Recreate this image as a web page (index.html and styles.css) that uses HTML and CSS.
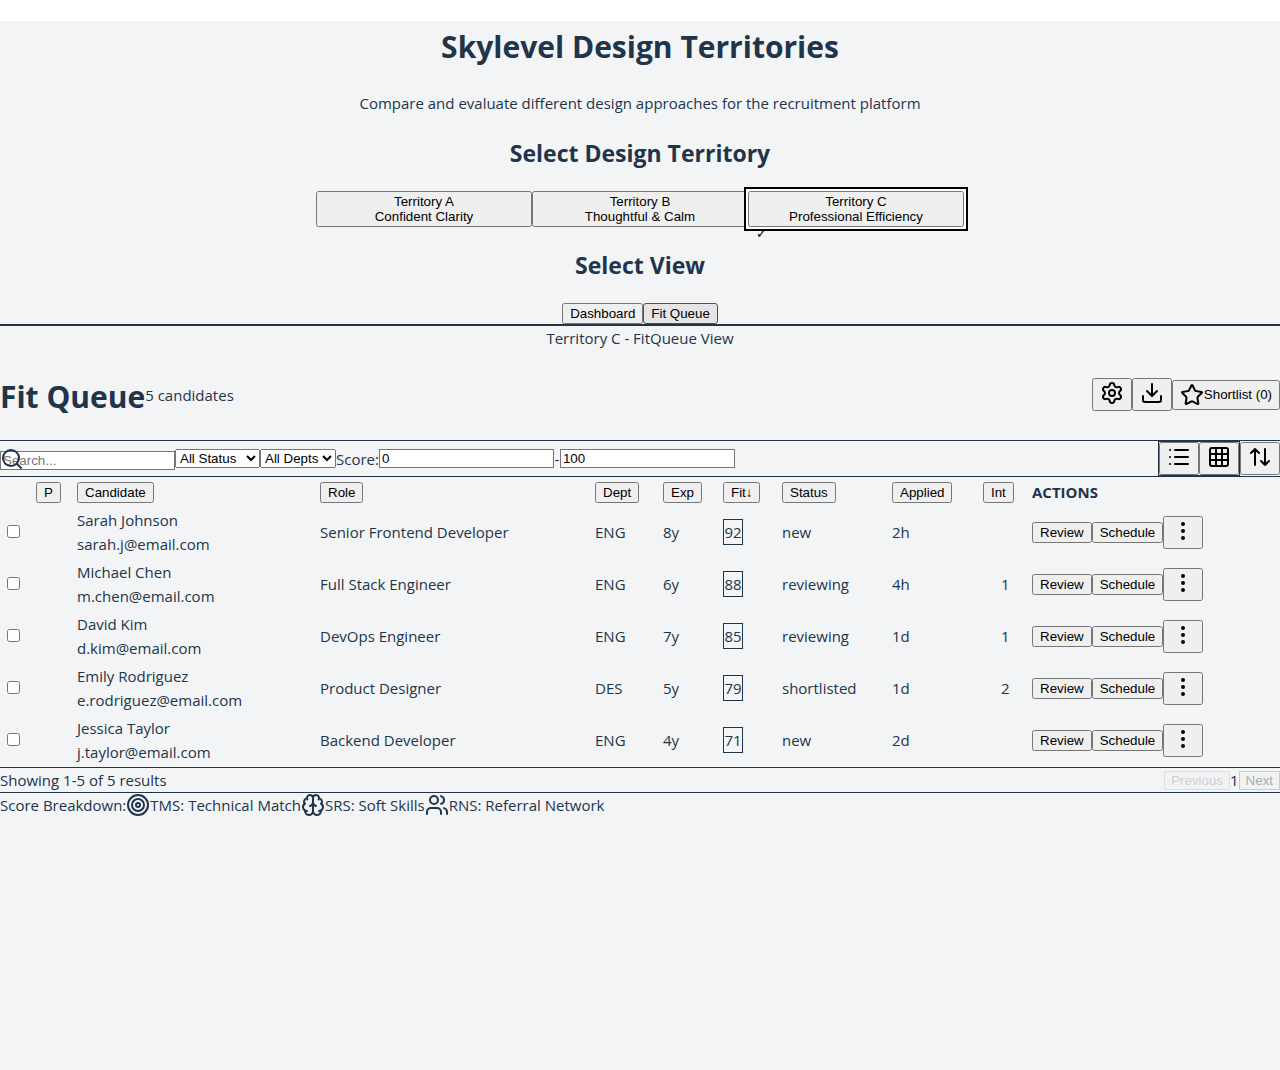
FILE: index.html
```html
<!DOCTYPE html>
<html lang="en">
<head>
<meta charset="utf-8">
<meta name="viewport" content="width=device-width, initial-scale=1">
<title>Skylevel Design Territories</title>
<link rel="stylesheet" href="styles.css">
</head>
<body>
<svg class="sprite" aria-hidden="true">
  <symbol id="settings" viewBox="0 0 24 24"><path d="M9.671 4.136a2.34 2.34 0 0 1 4.659 0 2.34 2.34 0 0 0 3.319 1.915 2.34 2.34 0 0 1 2.33 4.033 2.34 2.34 0 0 0 0 3.831 2.34 2.34 0 0 1-2.33 4.033 2.34 2.34 0 0 0-3.319 1.915 2.34 2.34 0 0 1-4.659 0 2.34 2.34 0 0 0-3.32-1.915 2.34 2.34 0 0 1-2.33-4.033 2.34 2.34 0 0 0 0-3.831A2.34 2.34 0 0 1 6.35 6.051a2.34 2.34 0 0 0 3.319-1.915"/><circle cx="12" cy="12" r="3"/></symbol>
  <symbol id="download" viewBox="0 0 24 24"><path d="M12 15V3"/><path d="M21 15v4a2 2 0 0 1-2 2H5a2 2 0 0 1-2-2v-4"/><path d="m7 10 5 5 5-5"/></symbol>
  <symbol id="star" viewBox="0 0 24 24"><path d="M11.525 2.295a.53.53 0 0 1 .95 0l2.31 4.679a2.123 2.123 0 0 0 1.595 1.16l5.166.756a.53.53 0 0 1 .294.904l-3.736 3.638a2.123 2.123 0 0 0-.611 1.878l.882 5.14a.53.53 0 0 1-.771.56l-4.618-2.428a2.122 2.122 0 0 0-1.973 0L6.396 21.01a.53.53 0 0 1-.77-.56l.881-5.139a2.122 2.122 0 0 0-.611-1.879L2.16 9.795a.53.53 0 0 1 .294-.906l5.165-.755a2.122 2.122 0 0 0 1.597-1.16z"/></symbol>
  <symbol id="search" viewBox="0 0 24 24"><path d="m21 21-4.34-4.34"/><circle cx="11" cy="11" r="8"/></symbol>
  <symbol id="list" viewBox="0 0 24 24"><path d="M3 5h.01M3 12h.01M3 19h.01M8 5h13M8 12h13M8 19h13"/></symbol>
  <symbol id="grid" viewBox="0 0 24 24"><rect width="18" height="18" x="3" y="3" rx="2"/><path d="M3 9h18M3 15h18M9 3v18M15 3v18"/></symbol>
  <symbol id="sort" viewBox="0 0 24 24"><path d="m21 16-4 4-4-4M17 20V4M3 8l4-4 4 4M7 4v16"/></symbol>
  <symbol id="more" viewBox="0 0 24 24"><circle cx="12" cy="12" r="1"/><circle cx="12" cy="5" r="1"/><circle cx="12" cy="19" r="1"/></symbol>
  <symbol id="target" viewBox="0 0 24 24"><circle cx="12" cy="12" r="10"/><circle cx="12" cy="12" r="6"/><circle cx="12" cy="12" r="2"/></symbol>
  <symbol id="brain" viewBox="0 0 24 24"><path d="M12 18V5"/><path d="M15 13a4.17 4.17 0 0 1-3-4 4.17 4.17 0 0 1-3 4"/><path d="M17.598 6.5A3 3 0 1 0 12 5a3 3 0 1 0-5.598 1.5"/><path d="M17.997 5.125a4 4 0 0 1 2.526 5.77"/><path d="M18 18a4 4 0 0 0 2-7.464"/><path d="M19.967 17.483A4 4 0 1 1 12 18a4 4 0 1 1-7.967-.517"/><path d="M6 18a4 4 0 0 1-2-7.464"/><path d="M6.003 5.125a4 4 0 0 0-2.526 5.77"/></symbol>
  <symbol id="users" viewBox="0 0 24 24"><path d="M16 21v-2a4 4 0 0 0-4-4H6a4 4 0 0 0-4 4v2"/><path d="M16 3.128a4 4 0 0 1 0 7.744"/><path d="M22 21v-2a4 4 0 0 0-3-3.87"/><circle cx="9" cy="7" r="4"/></symbol>
</svg>
<div class="app">
  <header class="intro">
    <h1>Skylevel Design Territories</h1>
    <p>Compare and evaluate different design approaches for the recruitment platform</p>
    <h2>Select Design Territory</h2>
    <div class="territories">
      <button type="button"><span>Territory A</span><span>Confident Clarity</span></button>
      <button type="button"><span>Territory B</span><span>Thoughtful &amp; Calm</span></button>
      <button type="button" class="selected" aria-pressed="true"><span>Territory C</span><span>Professional Efficiency</span><span class="check">✓</span></button>
    </div>
    <h2>Select View</h2>
    <div class="views">
      <button type="button">Dashboard</button>
      <button type="button" class="current">Fit Queue</button>
    </div>
  </header>

  <main>
    <div class="view-name">Territory C - FitQueue View</div>
    <div class="queue-header">
      <h1>Fit Queue</h1>
      <span class="count">5 candidates</span>
      <div class="queue-actions">
        <button type="button" aria-label="Settings"><svg class="icon"><use href="#settings"/></svg></button>
        <button type="button" aria-label="Download"><svg class="icon"><use href="#download"/></svg></button>
        <button type="button" class="shortlist"><svg class="icon"><use href="#star"/></svg>Shortlist (0)</button>
      </div>
    </div>

    <div class="toolbar">
      <div class="search">
        <svg class="icon search-icon"><use href="#search"/></svg>
        <input type="text" class="field" placeholder="Search..." aria-label="Search">
      </div>
      <div class="filters">
        <select class="status-select" aria-label="Status"><option>All Status</option></select>
        <select class="dept-select" aria-label="Department"><option>All Depts</option></select>
        <label for="score-min">Score:</label>
        <input type="text" class="field" id="score-min" value="0">
        <span class="dash">-</span>
        <input type="text" class="field" value="100" aria-label="Maximum score">
      </div>
      <div class="toggles">
        <div class="layout-toggle">
          <button type="button" aria-label="List"><svg class="icon"><use href="#list"/></svg></button>
          <button type="button" aria-label="Grid"><svg class="icon"><use href="#grid"/></svg></button>
        </div>
        <button type="button" aria-label="Sort"><svg class="icon"><use href="#sort"/></svg></button>
      </div>
    </div>

    <table class="candidates">
      <colgroup>
        <col class="col-check"><col class="col-priority"><col class="col-name"><col class="col-role"><col class="col-dept"><col class="col-exp"><col class="col-fit"><col class="col-status"><col class="col-applied"><col class="col-int"><col>
      </colgroup>
      <thead>
        <tr>
          <th></th>
          <th><button type="button">P</button></th>
          <th><button type="button">Candidate</button></th>
          <th><button type="button">Role</button></th>
          <th><button type="button">Dept</button></th>
          <th><button type="button">Exp</button></th>
          <th><button type="button">Fit↓</button></th>
          <th><button type="button">Status</button></th>
          <th><button type="button">Applied</button></th>
          <th><button type="button">Int</button></th>
          <th>ACTIONS</th>
        </tr>
      </thead>
      <tbody>
        <tr>
          <td><input type="checkbox" aria-label="Select Sarah Johnson"></td><td></td>
          <td><div>Sarah Johnson</div><div>sarah.j@email.com</div></td>
          <td>Senior Frontend Developer</td><td>ENG</td><td>8y</td><td><span class="score">92</span></td><td>new</td><td>2h</td><td class="interviews"></td>
          <td><div class="row-actions"><button type="button">Review</button><button type="button">Schedule</button><button type="button" aria-label="More"><svg class="icon"><use href="#more"/></svg></button></div></td>
        </tr>
        <tr>
          <td><input type="checkbox" aria-label="Select Michael Chen"></td><td></td>
          <td><div>Michael Chen</div><div>m.chen@email.com</div></td>
          <td>Full Stack Engineer</td><td>ENG</td><td>6y</td><td><span class="score">88</span></td><td>reviewing</td><td>4h</td><td class="interviews">1</td>
          <td><div class="row-actions"><button type="button">Review</button><button type="button">Schedule</button><button type="button" aria-label="More"><svg class="icon"><use href="#more"/></svg></button></div></td>
        </tr>
        <tr>
          <td><input type="checkbox" aria-label="Select David Kim"></td><td></td>
          <td><div>David Kim</div><div>d.kim@email.com</div></td>
          <td>DevOps Engineer</td><td>ENG</td><td>7y</td><td><span class="score">85</span></td><td>reviewing</td><td>1d</td><td class="interviews">1</td>
          <td><div class="row-actions"><button type="button">Review</button><button type="button">Schedule</button><button type="button" aria-label="More"><svg class="icon"><use href="#more"/></svg></button></div></td>
        </tr>
        <tr>
          <td><input type="checkbox" aria-label="Select Emily Rodriguez"></td><td></td>
          <td><div>Emily Rodriguez</div><div>e.rodriguez@email.com</div></td>
          <td>Product Designer</td><td>DES</td><td>5y</td><td><span class="score">79</span></td><td>shortlisted</td><td>1d</td><td class="interviews">2</td>
          <td><div class="row-actions"><button type="button">Review</button><button type="button">Schedule</button><button type="button" aria-label="More"><svg class="icon"><use href="#more"/></svg></button></div></td>
        </tr>
        <tr>
          <td><input type="checkbox" aria-label="Select Jessica Taylor"></td><td></td>
          <td><div>Jessica Taylor</div><div>j.taylor@email.com</div></td>
          <td>Backend Developer</td><td>ENG</td><td>4y</td><td><span class="score">71</span></td><td>new</td><td>2d</td><td class="interviews"></td>
          <td><div class="row-actions"><button type="button">Review</button><button type="button">Schedule</button><button type="button" aria-label="More"><svg class="icon"><use href="#more"/></svg></button></div></td>
        </tr>
      </tbody>
    </table>

    <div class="results">
      <span>Showing 1-5 of 5 results</span>
      <div class="pager">
        <button type="button" class="previous" disabled>Previous</button>
        <span>1</span>
        <button type="button" disabled>Next</button>
      </div>
    </div>
    <div class="legend">
      <span>Score Breakdown:</span>
      <svg class="icon"><use href="#target"/></svg><span>TMS: Technical Match</span>
      <svg class="icon"><use href="#brain"/></svg><span>SRS: Soft Skills</span>
      <svg class="icon"><use href="#users"/></svg><span>RNS: Referral Network</span>
    </div>
  </main>
</div>
</body>
</html>
```
FILE: styles.css
```css
html {
  background: #fff;
}

body {
  margin: 0;
  color: #22344a;
  font: 15px/24px "Segoe UI", "Open Sans", sans-serif;
}

button,
select,
input {
  font-family: "Liberation Sans", Arial, sans-serif;
}

.sprite {
  display: none;
}

.icon {
  width: 24px;
  height: 24px;
  flex: none;
  fill: none;
  stroke: currentColor;
  stroke-width: 2;
  stroke-linecap: round;
  stroke-linejoin: round;
}

.app {
  margin-top: 21px;
  min-height: calc(100vh - 21px);
  background: #f3f4f6;
}

h1 {
  margin: 0;
  font-size: 30px;
  line-height: 52px;
}

h2 {
  margin: 20px 0;
  font-size: 23px;
  line-height: 36px;
}

.intro {
  display: flow-root;
  text-align: center;
  border-bottom: 2px solid #22344a;
}

.intro p {
  margin: 18px 0 20px;
}

.territories {
  display: grid;
  grid-template-columns: repeat(3, 216px);
  justify-content: center;
}

.territories span {
  display: block;
}

.territories .selected {
  outline: 2px solid #000;
  outline-offset: 2px;
  box-shadow: 0 0 0 2px #fff;
}

.territories .check {
  position: absolute;
  line-height: 20px;
}

.views {
  display: flex;
  justify-content: center;
}

.views .current {
  padding: 2px 7px;
  background: #e5e5e5;
  border: 1px solid #4f4f4f;
  border-radius: 3px;
}

.view-name {
  text-align: center;
}

.queue-header {
  display: flex;
  align-items: flex-start;
  padding: 21px 0 17px;
}

.count {
  padding-top: 12px;
}

.queue-actions {
  display: flex;
  align-items: center;
  margin-left: auto;
  padding-top: 7px;
}

.shortlist {
  display: flex;
  align-items: center;
}

.toolbar {
  display: flex;
  align-items: center;
  border: solid #22344a;
  border-width: 1px 0;
}

.search {
  display: flex;
  align-items: flex-end;
  height: 23px;
  position: relative;
}

.search-icon {
  position: absolute;
  top: 0;
  left: 0;
}

.field {
  box-sizing: border-box;
  width: 175px;
  height: 19px;
  padding: 1px 2px;
  border: 1px solid #767676;
}

.filters {
  display: flex;
  align-items: center;
}

.status-select {
  width: 85px;
}

.dept-select {
  width: 76px;
}

.dash {
  width: 6px;
  text-align: center;
}

.toggles {
  display: flex;
  align-items: center;
  margin-left: auto;
}

.layout-toggle {
  display: flex;
  border: 1px solid #22344a;
}

.candidates {
  width: 100%;
  table-layout: fixed;
}

.candidates th {
  height: 24px;
  text-align: left;
}

.candidates th button {
  display: block;
}

.col-check { width: 31px; }
.col-priority { width: 39px; }
.col-name { width: 241px; }
.col-role { width: 273px; }
.col-dept { width: 66px; }
.col-exp { width: 58px; }
.col-fit { width: 57px; }
.col-status { width: 108px; }
.col-applied { width: 89px; }
.col-int { width: 47px; }

.score {
  display: block;
  width: 18px;
  border: 1px solid #22344a;
  text-align: center;
}

.candidates .interviews {
  padding-left: 19px;
}

.row-actions {
  display: flex;
  align-items: center;
}

.results {
  display: flex;
  justify-content: space-between;
  border: solid #22344a;
  border-width: 1px 0;
}

.pager {
  display: flex;
  align-items: center;
}

.pager button {
  padding: 1px 6px;
  border: 1px solid #cbcccd;
  background: #f0f1f1;
  color: #acadae;
}

.pager .previous {
  opacity: 0.5;
}

.legend {
  display: flex;
  align-items: center;
}
```
